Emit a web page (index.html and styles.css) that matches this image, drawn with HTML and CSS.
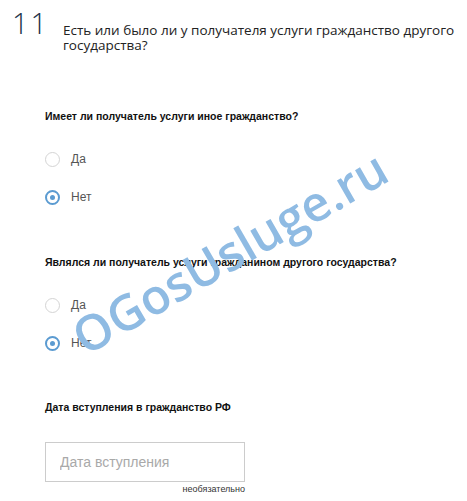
FILE: index.html
```html
<html>
<head>
    <link rel="stylesheet" href="styles.css">
</head>
<body>
    <div class="page">
        <div class="head">
            <div class="num">11</div>
            <div class="title">Есть или было ли у получателя услуги гражданство другого государства?</div>
        </div>

        <div class="block">
            <div class="label">Имеет ли получатель услуги иное гражданство?</div>
            <div class="radio"><span class="dot"></span>Да</div>
            <div class="radio"><span class="dot on"></span>Нет</div>
        </div>

        <div class="block second">
            <div class="label">Являлся ли получатель услуги гражданином другого государства?</div>
            <div class="radio"><span class="dot"></span>Да</div>
            <div class="radio"><span class="dot on"></span>Нет</div>
        </div>

        <div class="block third">
            <div class="label">Дата вступления в гражданство РФ</div>
            <div class="field">
                <input type="text" placeholder="Дата вступления">
                <div class="hint">необязательно</div>
            </div>
        </div>

        <div class="mark">OGosUsluge.ru</div>
    </div>
</body>
</html>
```

FILE: styles.css
```css
body{
    margin: 0;
    padding: 0;
    background: #fff;
    font-family: "Liberation Sans", Arial, sans-serif;
}
.page{
    position: relative;
    width: 467px;
    height: 501px;
    overflow: hidden;
}
.head{
    display: flex;
    padding: 8px 0 0 12px;
}
.num{
    font-family: "Open Sans", sans-serif;
    font-weight: 300;
    font-size: 29px;
    line-height: 30px;
    color: #23334a;
    width: 51px;
    letter-spacing: 2px;
}
.title{
    font-family: "Open Sans", sans-serif;
    font-size: 13.5px;
    line-height: 15px;
    color: #222;
    padding-top: 15px;
    width: 395px;
}
.block{
    padding-left: 45px;
    margin-top: 56px;
}
.block.second{
    margin-top: 50px;
}
.block.third{
    margin-top: 49px;
}
.label{
    font-size: 10.5px;
    font-weight: bold;
    color: #111;
    line-height: 14px;
}
.radio{
    display: flex;
    align-items: center;
    height: 16px;
    margin-top: 28px;
    font-size: 12px;
    color: #555;
}
.radio + .radio{
    margin-top: 22px;
}
.dot{
    box-sizing: border-box;
    width: 15px;
    height: 15px;
    border: 1px solid #d4d4d4;
    border-radius: 50%;
    margin-right: 11px;
    position: relative;
}
.dot.on{
    border: 2px solid #5b9bd1;
}
.dot.on::after{
    content: "";
    position: absolute;
    left: 3px;
    top: 3px;
    width: 5px;
    height: 5px;
    border-radius: 50%;
    background: #5b9bd1;
}
.field{
    width: 200px;
    margin-top: 28px;
}
.field input{
    box-sizing: border-box;
    width: 200px;
    height: 40px;
    border: 1px solid #ccc;
    padding: 0 14px;
    font-family: "Liberation Sans", Arial, sans-serif;
    font-size: 14px;
    outline: none;
}
.field input::placeholder{
    color: #a9a9a9;
}
.hint{
    text-align: right;
    font-size: 9px;
    color: #333;
    margin-top: 2px;
}
.mark{
    position: absolute;
    left: 91px;
    top: 306px;
    font-family: "Open Sans", sans-serif;
    font-weight: 600;
    font-size: 49px;
    color: #8fbbe3;
    transform: rotate(-30deg);
    transform-origin: left bottom;
    white-space: nowrap;
    line-height: 60px;
}
```
